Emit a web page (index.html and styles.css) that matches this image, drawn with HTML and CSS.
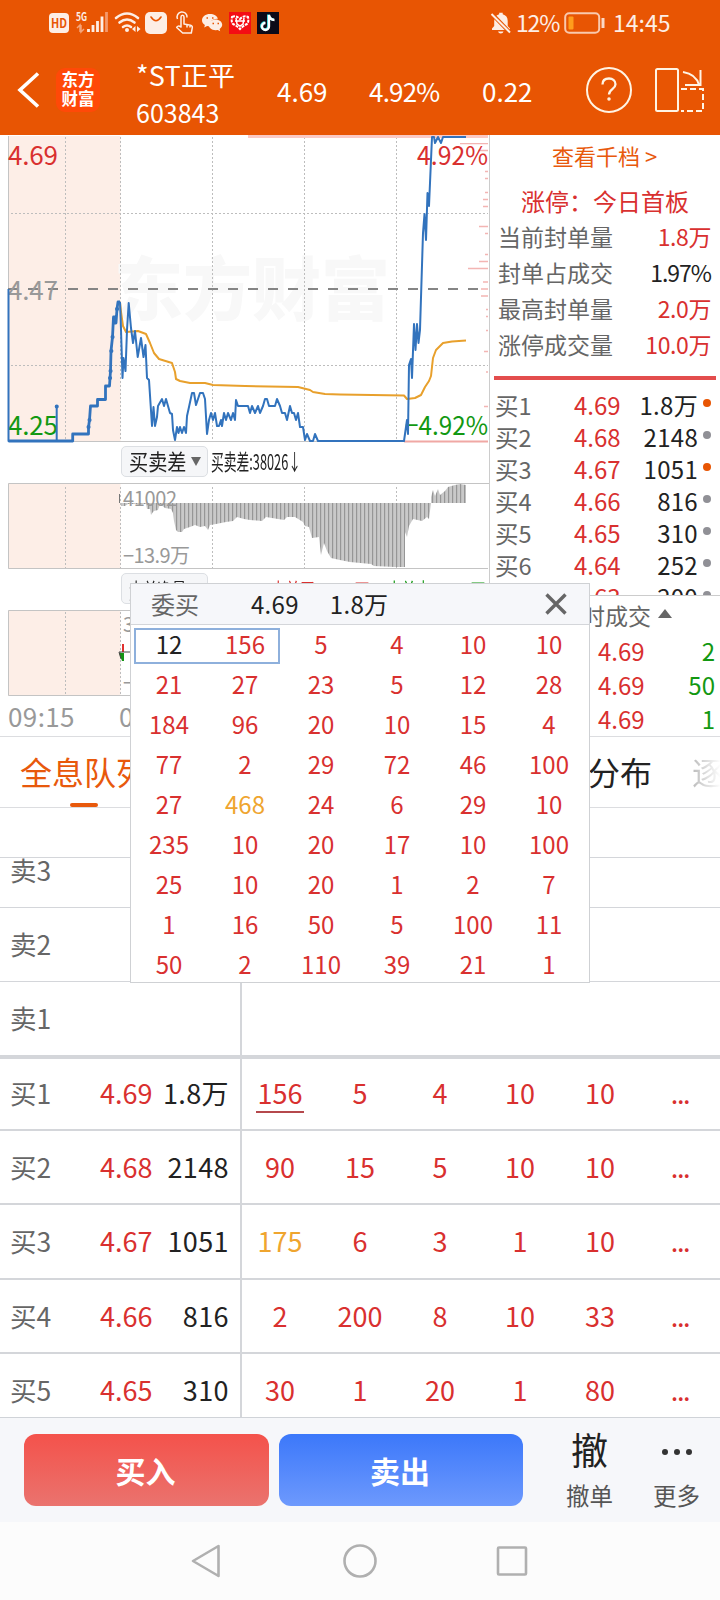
FILE: index.html
```
<!DOCTYPE html>
<html lang="zh-CN">
  <head>
    <meta charset="UTF-8" />
    <meta name="viewport" content="width=device-width, initial-scale=1.0" />
    <title>*ST正平 603843</title>
    <link rel="stylesheet" href="styles.css">
  </head>
  <body>
    <header class="header">
      <div class="status">
        <svg class="status-icons" width="240" height="46" viewBox="45 0 240 46">
          <rect x="49" y="13" width="20" height="20" rx="4" fill="#fdeee5" />
          <text x="51" y="28" font-size="12.5" font-weight="700" fill="#e85503" textLength="16" lengthAdjust="spacingAndGlyphs">HD</text>
          <text x="76" y="21" font-size="11" font-weight="700" fill="#fdeee5" textLength="11" lengthAdjust="spacingAndGlyphs">5G</text>
          <path d="M77 28l3-3v7M81 25v7l3-3" fill="none" stroke="#f4a57c" stroke-width="1.5" />
          <path d="M88.5 29v3M93 25v7M97.500 21v11M102 16.500v15.500" stroke="#fdeee5" stroke-width="2.8" />
          <path d="M106.500 12v20" stroke="#f4996b" stroke-width="2.800" />
          <path d="M116 18q11-9 22 0M119.500 22.500q7.500-6 15 0M123 27q4-3 8 0" fill="none" stroke="#fdeee5" stroke-width="2.600" stroke-linecap="round" />
          <circle cx="127" cy="30" r="2" fill="#fdeee5" />
          <path d="M135.500 26v6l-3.500-3zM137 26v6l3.500-3z" fill="#fdeee5" />
          <rect x="145" y="12" width="22" height="22" rx="5" fill="#fdeee5" />
          <path d="M151 17q5 7.500 10 0" fill="none" stroke="#e85503" stroke-width="1.600" stroke-linecap="round" />
          <path d="M181 26V17q0-1.800 1.500-1.800T184 17v7l6.500 1.200q2 .5 1.800 2.500l-1 5.300h-8.600l-6-5.500q1-2.500 4.300-.5zM187 24.500v3M190 25v2.500M177.500 19a5 5 0 1 1 9.500-1.500" fill="none" stroke="#fdeee5" stroke-width="1.500" stroke-linejoin="round" />
          <path d="M210 14c-4.500 0-8 2.700-8 6.200 0 2 1.100 3.700 2.900 4.800l-.7 2.500 2.900-1.500 2.900.4c-1-5 3-8 7.900-7.700-.7-2.800-4-4.700-7.900-4.700z" fill="#fdeee5" />
          <path d="M215.500 19.500c-3.800 0-6.800 2.300-6.800 5.300s3 5.400 6.800 5.400l2.200-.3 2.500 1.400-.6-2.300c1.600-1 2.600-2.500 2.600-4.200 0-3-3-5.300-6.700-5.300z" fill="#fdeee5" />
          <path d="M206.500 18h1.500M212 18h1.500M212.500 23.500h1.500M217.500 23.500h1.500" stroke="#e85503" stroke-width="1.500" />
          <rect x="229" y="12" width="22" height="22" fill="#f40d14" />
          <path d="M232 17q4-2 8 2 4-4 8-2 1 5-1 7-4 2-7 5-3-3-7-5-2-2-1-7z" fill="none" stroke="#fff" stroke-width="2" stroke-dasharray="3 1" />
          <path d="M236 18l1 6 3 2 3-2 1-6M235 21h10" fill="none" stroke="#fff" stroke-width="1.500" />
          <rect x="257" y="12" width="22" height="22" fill="#0c0a18" />
          <path d="M269 15v11.500a3.500 3.500 0 1 1-3.500-3.500M269 15q1 5 5.500 5" fill="none" stroke="#36e0e0" stroke-width="2.500" transform="translate(-.7 -.5)" />
          <path d="M269 15v11.500a3.500 3.500 0 1 1-3.500-3.500M269 15q1 5 5.500 5" fill="none" stroke="#fff" stroke-width="2.300" />
        </svg>
        <svg class="bell" width="22" height="24" viewBox="490 11 22 24">
          <path d="M492 30h18v-1.500l-2.300-2.500v-5c0-3.600-1.800-6-5-6.800V12.800h-3.500v1.400c-3.200.8-5 3.200-5 6.800v5L492 28.500zM498 31.500h5.500q-.5 2-2.700 2t-2.800-2z" fill="#fdeee5" />
          <path d="M491.500 13.500L510 32.500" stroke="#e85503" stroke-width="4" />
          <path d="M491.500 14L510 32.500" stroke="#fdeee5" stroke-width="2" />
        </svg>
        <span class="status-power">12%</span>
        <svg class="battery" width="42" height="22" viewBox="0 0 42 22">
          <rect x="1.200" y="1.200" width="34" height="19.500" rx="4" fill="none" stroke="#f9c9ae" stroke-width="2" />
          <rect x="4.500" y="4.500" width="5" height="13" rx="1" fill="#ff9d1c" />
          <path d="M39 6v10" stroke="#fbd9c6" stroke-width="3" />
        </svg>
        <span class="status-time">14:45</span>
      </div>
      <div class="titlebar">
        <svg class="back" width="24" height="40" viewBox="16 70 24 40">
          <path d="M38 73.500L20 90l18 16.500" fill="none" stroke="#fff" stroke-width="3.600" />
        </svg>
        <div class="logo">东方<br />财富</div>
        <div class="stock">
          <div class="stock-name">*ST正平</div>
          <div class="stock-code">603843</div>
        </div>
        <div class="quote">4.69</div>
        <div class="quote quote-pct">4.92%</div>
        <div class="quote">0.22</div>
        <svg class="tools" width="124" height="48" viewBox="584 66 124 48" fill="none" stroke="#fff4e4" stroke-width="2">
          <circle cx="609" cy="90" r="22" />
          <path d="M602.500 84.500c0-4 2.700-6 6.500-6s6.500 2.200 6.500 5.700c0 5-6.500 4.800-6.500 10.300" stroke-width="2.300" />
          <circle cx="609" cy="99" r="1" stroke-width="1.500" />
          <rect x="656" y="69" width="22" height="42" rx="1.500" />
          <path d="M681 89h22v22h-22" stroke-dasharray="6 3" />
          <path d="M683 72q13 2 16 13M700.500 70v15H685" />
        </svg>
      </div>
    </header>

    <main class="market">
      <section class="charts">
        <svg class="price-chart" width="490" height="308" viewBox="0 135 490 308">
          <rect x="8" y="136" width="112.500" height="306" fill="#fdeee7" />
          <text class="watermark" x="114" y="315" textLength="276">东方财富</text>
          <path class="grid" d="M65.500 137V441M120.500 137V441M212.500 137V441M304.500 137V441M396.500 137V441M11 213.500H488M11 365.500H488" />
          <path class="frame" d="M8.500 136V441.500H488" />
          <path d="M8 289H480" stroke="#858585" stroke-width="2" stroke-dasharray="10 10" />
          <path d="M248 136.500H488" stroke="#fbc9c4" stroke-width="3" />
          <path d="M404 441.500H488" stroke="#f0a8a4" stroke-width="2" />
          <path d="M460 143.700h28M478 150.500h10M485 171.500h3M485 178.500h3M485 192.500h3M483 199.500h5M483 206.500h5M479 226.500h9M485 233.500h3M485 254.500h3M479 261.500h9M468 268.500h20M483 282h5M481 289h7M481 296h7M486 309.500h2M486 316.500h2M486 330.500h2M484 351.500h4M486 372h2M484 406.500h4" stroke="#f3b5b3" stroke-width="1.300" />
          <g class="scale">
            <text x="8" y="165" fill="#d9302f" textLength="50">4.69</text>
            <text x="8" y="300" fill="#999" textLength="50">4.47</text>
            <text x="8" y="435" fill="#129812" textLength="50">4.25</text>
            <text x="417" y="165" fill="#d9302f" textLength="71" lengthAdjust="spacingAndGlyphs">4.92%</text>
            <text x="405" y="435" fill="#129812" textLength="83" lengthAdjust="spacingAndGlyphs">−4.92%</text>
          </g>
          <polyline class="avg-line" points="120,302 121,312 123,326 126,332 138,331 146,334 150,343 154,353 159,359 172,363 175,372 176,379 180,381 190,383 205,383 213,385 245,386 298,387 310,390 313,392 325,394 340,394.5 404,395.5 407,399 415,398 421,395 425,387 429,381 431,376 433,358 436,350 443,343 452,341.5 466,340.5" />
          <polyline class="auction-line" points="8.500,441 72.700,441 72.700,434 88.500,434 88.500,427 89.500,420 90.500,406 97.500,406 97.500,399.500 105.500,399.500 105.500,386 109.500,386 110,378 110.500,371 111,351 112.500,337 113.500,317 115,317 114,323 116,323 117,309 118,302 120,302" />
          <path d="M88.500 427h.1M89.500 420h.1M110 378h.1M110.500 371h.1M111.300 351h.1M112.500 337h.1M117 309h.1M56.700 406.500h.1" stroke="#3273bd" stroke-width="4" stroke-linecap="round" />
          <polyline class="price-line" points="8.500,289 8.500,441 56.700,441 56.700,406 56.700,441 56.700,441" />
          <polyline class="price-line" points="120,302 120.700,320 122.500,378 123.500,358 125.500,371 127,330 128.700,303 131,328 133,343 135,331 137.700,357 141,338 143.500,357 145.500,345 147,378 149,380 152,426 153.500,407 155,426 157,417 158,406 162,399 164,406 166,399 168,406 170,413 172,414 173,430 175,440 177,427 178.500,433 180,427 182,433 184,427 186,433 187,416 189,407 192,393 194,393 196,405 198,399 200,393 203,393 205,399 207,434 209,420 211,413 213,420 215,413 217,426 219,426 221,420 222,426 224,413 226,420 228,413 231,420 233,413 235,420 236,400 238,406 248,406 250,413 252,406 255,413 258,406 260,413 263,406 265,399 267,399 269,406 275,406 277,399 280,406 282,413 285,413 287,420 290,406 292,413 294,413 296,420 298,413 300,427 303,427 305,440 307,434 310,441 313,441 315,434 318,441 404,441 407,420 408,434 409,365 411,359 412,378 414,324 415.500,350 417,324 418.500,343 420,330 423,233 424.500,214 426,240 427.500,193 429,206 431,160 432,137 434,137 435,143 438,137 441,143 443,137 466,137" />
        </svg>

        <div class="legend">
          <div class="legend-select"><span class="condensed">买卖差</span><i class="caret"></i></div>
          <span class="legend-value">买卖差:38026↓</span>
        </div>

        <svg class="sub-chart" width="490" height="88" viewBox="0 482 490 88">
          <defs>
            <pattern id="bars" width="4" height="4" patternUnits="userSpaceOnUse">
              <rect width="4" height="4" fill="#c9c9c9" />
              <rect width="1.200" height="4" fill="#969696" />
            </pattern>
          </defs>
          <rect x="8" y="483" width="112.500" height="86" fill="#fdeee7" />
          <path class="grid" d="M65.500 487V568M120.500 487V568M212.500 487V568M304.500 487V568M396.500 487V568" />
          <path class="frame" d="M489 483.500H8.500V568.500H488" />
          <polygon fill="url(#bars)" points="121,503 121,506 125,506 128,504 146,504 147,509 150,509 151,515 153,512 154,511 158,510 160,504 165,508 171,509 173,513 174,521 176,530 178,532 182,532 184,529 190,527 195,525 200,527 205,526 208,530 210,525 216,524 226,522 233,521 237,517 244,519 250,520 262,521 266,517 284,520 287,517 295,517 303,522 305,526 309,527 312,538 319,537 321,555 324,543 327,551 331,558 340,560 350,562 371,564 374,566 395,567 405,567 405,532 407,537 409,526 413,519 422,521 427,517 429,519 431,503 431,497 433,490 435,496 438,489 440,495 445,491 448,487 455,485 460,484 466,485 466,503" />
          <path d="M119.500 494v9" stroke="#777" />
          <g class="sub-scale">
            <text x="123" y="506" textLength="54">41002</text>
            <text x="123" y="563" textLength="67">−13.9万</text>
          </g>
        </svg>

        <div class="legend legend-flow">
          <div class="legend-select"><span class="condensed condensed-4">大单净量</span></div>
          <span class="legend-value flow-net">-4855</span>
          <span class="legend-value flow-in">大单买:11.01万</span>
          <span class="legend-value flow-out">大单卖:11.19万</span>
        </div>

        <svg class="sub-chart" width="490" height="88" viewBox="0 609 490 88">
          <rect x="8" y="610" width="112.500" height="86" fill="#fdeee7" />
          <path class="grid" d="M65.500 612V695M120.500 612V695" />
          <path class="frame" d="M489 610.500H8.500V695.500H488" />
          <path d="M123 644v8" stroke="#e0302f" stroke-width="2" />
          <path d="M119 653h5v8h-2z" fill="#149414" />
          <path d="M119 652h12M119 652l2 7" stroke="#444" fill="none" />
          <g class="sub-scale">
            <text x="123" y="632">3</text>
            <text x="123" y="690">−</text>
          </g>
        </svg>

        <div class="axis"><span>09:15</span><span>09:30</span></div>
      </section>

      <section class="panel">
        <div class="panel-link">查看千档 &gt;</div>
        <div class="limit-title">涨停：今日首板</div>
        <dl class="stats">
          <dt>当前封单量</dt><dd>1.8万</dd>
          <dt>封单占成交</dt><dd class="dark">1.97%</dd>
          <dt>最高封单量</dt><dd>2.0万</dd>
          <dt>涨停成交量</dt><dd>10.0万</dd>
        </dl>
        <div class="divider"></div>
        <ul class="bids"></ul>
        <div class="ticks-title">分时成交<i class="caret-up"></i></div>
        <ul class="ticks">
          <li><span>4.69</span><b>2</b></li>
          <li><span>4.69</span><b>50</b></li>
          <li><span>4.69</span><b>1</b></li>
        </ul>
      </section>
    </main>

    <nav class="tabs">
      <span class="tab active">全息队列</span>
      <span class="tab tab-dist">分布</span>
      <span class="tab tab-faded">逐</span>
    </nav>

    <section class="queue">
      <div class="queue-head"></div>
    </section>

    <footer class="actions">
      <button class="btn buy">买入</button>
      <button class="btn sell">卖出</button>
      <div class="action">
        <span class="action-icon">撤</span>
        <span>撤单</span>
      </div>
      <div class="action">
        <svg class="action-icon" width="36" height="42" viewBox="0 0 36 42">
          <g fill="#333"><circle cx="6" cy="18" r="3" /><circle cx="18" cy="18" r="3" /><circle cx="30" cy="18" r="3" /></g>
        </svg>
        <span>更多</span>
      </div>
    </footer>

    <div class="sysnav">
      <svg width="720" height="78" viewBox="0 1522 720 78" fill="none" stroke="#b0b0b0" stroke-width="2.600" stroke-linejoin="round">
        <path d="M218.500 1546v30L193 1561z" />
        <circle cx="360" cy="1561" r="15.500" />
        <rect x="498" y="1547.500" width="28" height="27" rx="1" />
      </svg>
    </div>

    <div class="popup">
      <div class="popup-head">
        <span>委买</span>
        <b>4.69</b>
        <b>1.8万</b>
        <svg width="24" height="24" viewBox="0 0 24 24"><path d="M2.500 2.500l19 19M21.500 2.500l-19 19" stroke="#666" stroke-width="3.400" /></svg>
      </div>
      <div class="popup-grid"></div>
      <div class="popup-selected"></div>
    </div>

    <script>
      const bids = [
        ["买1", "4.69", "1.8万", [156, 5, 4, 10, 10]],
        ["买2", "4.68", "2148", [90, 15, 5, 10, 10]],
        ["买3", "4.67", "1051", [175, 6, 3, 1, 10]],
        ["买4", "4.66", "816", [2, 200, 8, 10, 33]],
        ["买5", "4.65", "310", [30, 1, 20, 1, 80]],
        ["买6", "4.64", "252", []],
        ["买7", "4.63", "200", []],
      ];
      const hotBids = ["买1", "买3"];

      const orders = [
        12, 156, 5, 4, 10, 10,
        21, 27, 23, 5, 12, 28,
        184, 96, 20, 10, 15, 4,
        77, 2, 29, 72, 46, 100,
        27, 468, 24, 6, 29, 10,
        235, 10, 20, 17, 10, 100,
        25, 10, 20, 1, 2, 7,
        1, 16, 50, 5, 100, 11,
        50, 2, 110, 39, 21, 1,
      ];

      document.querySelector(".bids").innerHTML = bids
        .map(
          ([name, price, qty]) => `<li>
            <span class="bid-name">${name}</span>
            <span class="bid-price">${price}</span>
            <span class="bid-qty">${qty}</span>
            <i class="dot ${hotBids.includes(name) ? "hot" : ""}"></i>
          </li>`
        )
        .join("");

      const queueRow = (name, price, qty, cells, cls) => `<div class="queue-row ${cls}">
        <div class="queue-left">
          <span class="queue-name">${name}</span>
          <span class="queue-price">${price}</span>
          <span class="queue-qty">${qty}</span>
        </div>
        <div class="queue-cells">
          ${cells.map((c) => `<span class="${c === 175 ? "big" : c === "..." ? "more" : ""}">${c}</span>`).join("")}
        </div>
      </div>`;

      const queue = document.querySelector(".queue");
      ["卖3", "卖2", "卖1"].forEach((name, i) => {
        queue.insertAdjacentHTML("beforeend", queueRow(name, "", "", [], `sell-${3 - i}`));
      });
      bids.slice(0, 5).forEach(([name, price, qty, cells], i) => {
        queue.insertAdjacentHTML(
          "beforeend",
          queueRow(name, price, qty, [...cells, "..."], i === 0 ? "first" : "")
        );
      });

      document.querySelector(".popup-grid").innerHTML = orders
        .map((n, i) => `<span class="${i === 0 ? "own" : n > 400 ? "big" : ""}">${n}</span>`)
        .join("");
    </script>
  </body>
</html>
```

FILE: styles.css
```
* {
  box-sizing: border-box;
}
body {
  margin: 0;
  width: 720px;
  height: 1600px;
  position: relative;
  overflow: hidden;
  background: #fff;
  color: #222;
  font-family: "Noto Sans CJK SC", "Noto Sans", sans-serif;
}
svg {
  display: block;
  flex: none;
}
ul,
dl,
dd {
  margin: 0;
  padding: 0;
  list-style: none;
}

/* header */
.header {
  height: 135px;
  background: #e85503;
  color: #fff;
}
.status {
  height: 46px;
  display: flex;
  align-items: center;
  padding-left: 45px;
  color: #fdeee5;
  font-size: 23px;
  line-height: 42px;
}
.bell {
  margin-left: 205px;
}
.status-power {
  width: 48px;
  padding: 0 0 3px 4px;
  letter-spacing: -1.2px;
}
.battery {
  margin-left: 4px;
}
.status-time {
  margin-left: 7px;
  padding-bottom: 3px;
}
.titlebar {
  height: 88px;
  display: flex;
  align-items: center;
  padding-left: 16px;
}
.logo {
  width: 44px;
  height: 44px;
  margin-left: 16px;
  padding-top: 2px;
  border-radius: 9px;
  background: #ff4908;
  font-size: 16.5px;
  font-weight: 700;
  line-height: 19px;
  text-align: center;
}
.stock {
  width: 140px;
  margin-left: 36px;
}
.stock-name {
  font-size: 27px;
  line-height: 39px;
  margin-top: 5px;
  letter-spacing: 0.2px;
}
.stock-code {
  font-size: 25px;
  line-height: 36px;
}
.quote {
  width: 93px;
  padding-left: 1px;
  font-size: 26px;
  line-height: 40px;
  padding-top: 2px;
}
.quote-pct {
  width: 112px;
  padding-left: 0;
  letter-spacing: -0.8px;
}
.tools {
  margin-left: 10px;
}

/* charts and side panel */
.market {
  height: 602px;
  display: flex;
  border-bottom: 1px solid #dcdde0;
}
.charts {
  width: 490px;
  border-right: 1px solid #ccc;
}
.grid {
  fill: none;
  stroke: #bdbdbd;
  stroke-dasharray: 2 2;
}
.frame {
  fill: none;
  stroke: #c4c4c4;
}
.watermark {
  font-size: 69px;
  font-weight: 900;
  fill: #f8f8f8;
}
.scale {
  font-size: 26px;
}
.sub-scale {
  font-size: 20px;
  fill: #999;
}
.avg-line,
.price-line,
.auction-line {
  fill: none;
  stroke: #e8a02c;
  stroke-width: 2;
  stroke-linejoin: round;
}
.price-line {
  stroke: #3273bd;
  stroke-width: 2;
}
.auction-line {
  stroke: #3273bd;
  stroke-width: 2.8;
}
.legend {
  height: 39px;
  padding: 3px 0 5px 121px;
  display: flex;
  white-space: nowrap;
}
.legend-select {
  width: 87px;
  height: 31px;
  padding: 0 6px 0 7px;
  display: flex;
  align-items: center;
  justify-content: space-between;
  border: 1px solid #dcdfe3;
  border-radius: 5px;
  background: #f5f6f8;
  font-size: 22px;
  line-height: 26px;
}
.condensed {
  width: 56px;
  padding-bottom: 3px;
  transform: scaleX(0.87);
  transform-origin: left;
}
.condensed-4 {
  transform: scaleX(0.65);
  padding-bottom: 0;
}
.caret {
  border: 5px solid transparent;
  border-top: 9px solid #666;
  border-bottom: 0;
}
.legend-value {
  width: 60px;
  margin-left: 3px;
  font-size: 22px;
  line-height: 29px;
  transform: scaleX(0.58);
  transform-origin: left;
}
.legend-flow {
  padding-top: 3px;
}
.legend-flow .legend-value {
  line-height: 32px;
}
.flow-net {
  margin-left: 7px;
}
.flow-in {
  margin-left: -4px;
  color: #d9302f;
  transform: scaleX(0.66);
}
.flow-out {
  margin-left: 56px;
  color: #129812;
  transform: scaleX(0.66);
}
.axis {
  display: flex;
  gap: 44px;
  padding-left: 8px;
  color: #999;
  font-size: 26px;
  line-height: 37px;
  letter-spacing: 0.4px;
}

.panel {
  width: 230px;
  font-size: 24px;
}
.panel-link {
  height: 42px;
  padding-left: 62px;
  color: #e8590c;
  font-size: 22px;
  line-height: 41px;
}
.limit-title {
  height: 41px;
  padding-left: 31px;
  color: #d9302f;
  line-height: 48px;
}
.stats {
  display: grid;
  grid-template-columns: 1fr auto;
  padding: 0 9px 0 8px;
  line-height: 36px;
  height: 158px;
  align-content: start;
}
.stats dt {
  color: #666;
  font-size: 23px;
}
.stats dd {
  color: #d9302f;
  font-size: 23px;
  text-align: right;
  letter-spacing: -0.4px;
}
.stats dd.dark {
  color: #222;
  letter-spacing: -1px;
}
.divider {
  height: 4px;
  margin: 0 4px;
  background: #e34d4d;
}
.bids {
  height: 216px;
  padding: 9px 9px 0 5px;
  overflow: hidden;
  border-bottom: 1px solid #ccc;
}
.bids li {
  height: 32px;
  display: flex;
  align-items: center;
  line-height: 32px;
}
.bid-name {
  width: 79px;
  color: #666;
  font-size: 23.5px;
}
.bid-price {
  color: #d9302f;
}
.bid-qty {
  flex: 1;
  text-align: right;
  letter-spacing: 0.3px;
}
.dot {
  width: 8px;
  height: 8px;
  margin: 0 0 4px 5px;
  border-radius: 50%;
  background: #909096;
}
.dot.hot {
  background: #e85503;
}
.ticks-title {
  height: 38px;
  padding-left: 69px;
  display: flex;
  align-items: center;
  color: #666;
  font-size: 23px;
  line-height: 34px;
}
.caret-up {
  margin: 0 0 4px 7px;
  border: 7px solid transparent;
  border-top: 0;
  border-bottom: 9px solid #666;
}
.ticks li {
  height: 34px;
  padding: 0 5px 0 108px;
  display: flex;
  justify-content: space-between;
  color: #d9302f;
  line-height: 34px;
}
.ticks b {
  color: #129812;
  font-weight: 400;
}

/* tabs */
.tabs {
  height: 71px;
  display: flex;
  overflow: hidden;
  border-bottom: 1px solid #dcdde0;
  font-size: 32px;
  line-height: 69px;
  white-space: nowrap;
}
.tab {
  flex: none;
}
.tab.active {
  width: 128px;
  margin-left: 20px;
  display: flex;
  flex-direction: column;
  align-items: center;
  color: #e8590c;
}
.tab.active::after {
  content: "";
  width: 28px;
  height: 4px;
  margin-top: -3px;
  border-radius: 2px;
  background: #e8590c;
}
.tab-dist {
  margin-left: 440px;
}
.tab-faded {
  margin-left: 40px;
  color: transparent;
  background: linear-gradient(90deg, #bbb, #fff 90%);
  background-clip: text;
  -webkit-background-clip: text;
}

/* order queue */
.queue {
  height: 610px;
  overflow: hidden;
  border-bottom: 1px solid #d0d3d8;
}
.queue-head {
  height: 50px;
  border-bottom: 1px solid #d4d6da;
}
.queue-row {
  height: 74.4px;
  display: flex;
  align-items: stretch;
  border-bottom: 2px solid #d4d6da;
  font-size: 27px;
  line-height: 71px;
}
.queue-left {
  width: 242px;
  padding: 0 11px 0 10px;
  display: flex;
  border-right: 2px solid #d4d6da;
}
.queue-name {
  width: 90px;
  color: #666;
  font-size: 26.5px;
}
.queue-price {
  color: #d9302f;
}
.queue-qty {
  flex: 1;
  text-align: right;
  letter-spacing: 0.4px;
}
.queue-cells {
  width: 478px;
  padding-right: 0;
  margin-left: -2px;
  display: grid;
  grid-template-columns: repeat(6, 80px);
  color: #d9302f;
  text-align: center;
}
.queue-cells .more {
  letter-spacing: -1.3px;
}
.queue-cells .big,
.popup-grid .big {
  color: #efa52f;
}
.queue-row.sell-3 {
  height: 50px;
  line-height: 23px;
  border-width: 1px;
}
.queue-row.sell-2 {
  height: 74px;
  border-width: 1px;
}
.queue-row.sell-1 {
  height: 77px;
  border-width: 4px;
}
.queue-row.first {
  height: 72px;
  line-height: 67px;
}
.first .queue-cells span:first-child::after {
  content: "";
  display: block;
  width: 48px;
  height: 2px;
  margin: -15px auto 0;
  background: #b5484c;
}

/* bottom bars */
.actions {
  height: 104px;
  display: flex;
  padding: 16px 0 0 24px;
  background: #f6f7fa;
}
.btn {
  width: 245px;
  height: 72px;
  margin-right: 10px;
  padding: 0 2px 0 0;
  border: 0;
  border-radius: 12px;
  color: #fff;
  font-family: inherit;
  font-size: 30px;
  font-weight: 700;
}
.buy {
  background: linear-gradient(#f4524b, #ea736e);
}
.sell {
  width: 244px;
  background: linear-gradient(#3c78fa, #6d99fd);
}
.action {
  width: 87px;
  margin-left: 13px;
  display: flex;
  flex-direction: column;
  align-items: center;
  color: #555;
  font-size: 23.5px;
  line-height: 36px;
}
.action + .action {
  margin-left: 0;
}
.action-icon {
  height: 44px;
  margin-top: -1px;
  color: #222;
  font-size: 37px;
  line-height: 33px;
}
.sysnav {
  height: 78px;
  background: #fcfcfc;
}

/* order list shown over the page */
.popup {
  position: absolute;
  left: 130px;
  top: 583px;
  width: 460px;
  height: 400px;
  border: 1px solid #cfd1d4;
  background: #fff;
}
.popup-head {
  height: 41px;
  padding: 0 21px 0 20px;
  display: flex;
  align-items: center;
  border-bottom: 1px solid #d4d6da;
  background: #f6f7fa;
  color: #666;
  font-size: 24px;
  line-height: 40px;
}
.popup-head b {
  margin-left: 52px;
  color: #222;
  font-weight: 400;
  letter-spacing: 0.3px;
}
.popup-head b + b {
  margin-left: 31px;
}
.popup-head svg {
  margin-left: auto;
}
.popup-grid {
  display: grid;
  grid-template-columns: repeat(6, 76px);
  grid-auto-rows: 40px;
  color: #d9302f;
  font-size: 24px;
  line-height: 38px;
  text-align: center;
}
.popup-grid .own {
  color: #222;
}
.popup-selected {
  position: absolute;
  left: 3px;
  top: 44px;
  width: 146px;
  height: 36px;
  border: 2px solid #8eb0dc;
}
```
